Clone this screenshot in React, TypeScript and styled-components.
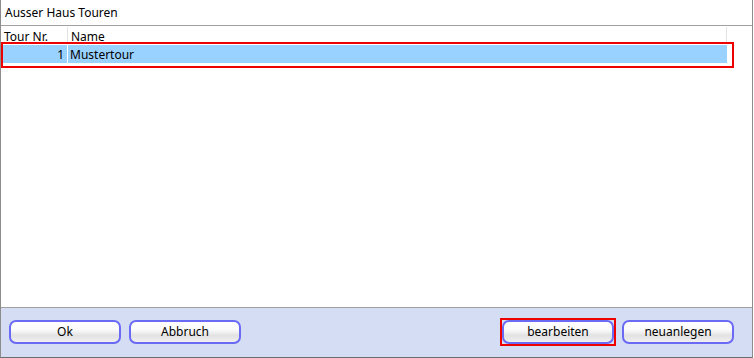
import styled, { createGlobalStyle } from "styled-components";

const GlobalStyle = createGlobalStyle`
  html, body {
    margin: 0;
    padding: 0;
    background: #ffffff;
  }
  body {
    font-family: "Noto Sans", "Liberation Sans", sans-serif;
    font-size: 12px;
    color: #000;
  }
`;

const Window = styled.div`
  width: 753px;
  height: 358px;
  box-sizing: border-box;
  border-left: 1px solid #8c8c8c;
  border-right: 1px solid #8c8c8c;
  border-bottom: 1px solid #6e6e6e;
  display: flex;
  flex-direction: column;
  background: #fff;
`;

const TitleBar = styled.div`
  height: 25px;
  flex: none;
  display: flex;
  align-items: center;
  padding-left: 4px;
  border-bottom: 1px solid #a0a0a0;
  font-size: 12px;
`;

const ListArea = styled.div`
  flex: 1;
  position: relative;
  background: #fff;
  padding-top: 1px;
`;

const HeaderRow = styled.div`
  display: flex;
  height: 17px;
  width: 725px;
  border-right: 1px solid #e3e3e3;
  align-items: flex-end;
`;

const HeaderCell = styled.div<{ $w?: number }>`
  width: ${(p) => (p.$w ? `${p.$w}px` : "auto")};
  flex: ${(p) => (p.$w ? "none" : "1")};
  box-sizing: border-box;
  padding-left: 3px;
  height: 100%;
  display: flex;
  align-items: flex-end;
  line-height: 14px;
  border-right: ${(p) => (p.$w ? "1px solid #e3e3e3" : "none")};
`;

const Row = styled.div<{ $selected?: boolean }>`
  display: flex;
  height: 18px;
  margin: 1px 0 0 2px;
  width: 724px;
  background: ${(p) => (p.$selected ? "#99d1ff" : "transparent")};
`;

const Cell = styled.div<{ $w?: number; $right?: boolean }>`
  width: ${(p) => (p.$w ? `${p.$w}px` : "auto")};
  flex: ${(p) => (p.$w ? "none" : "1")};
  box-sizing: border-box;
  display: flex;
  align-items: center;
  justify-content: ${(p) => (p.$right ? "flex-end" : "flex-start")};
  padding: 0 3px 0 2px;
  border-right: ${(p) => (p.$w ? "1px solid #fff" : "none")};
`;

const Highlight = styled.div<{ $top: number; $left: number; $w: number; $h: number }>`
  position: absolute;
  top: ${(p) => p.$top}px;
  left: ${(p) => p.$left}px;
  width: ${(p) => p.$w}px;
  height: ${(p) => p.$h}px;
  box-sizing: border-box;
  border: 2px solid #ee0000;
  pointer-events: none;
`;

const ButtonBar = styled.div`
  height: 50px;
  flex: none;
  box-sizing: border-box;
  border-top: 1px solid #a0a0a0;
  background: #d5ddf5;
  display: flex;
  align-items: center;
  padding: 0 18px 2px 8px;
  gap: 8px;
`;

const Spacer = styled.div`
  flex: 1;
`;

const ButtonWrap = styled.div<{ $marked?: boolean }>`
  border: 2px solid ${(p) => (p.$marked ? "#ee0000" : "transparent")};
  margin: -2px;
  display: flex;
`;

const Button = styled.button`
  width: 112px;
  height: 24px;
  box-sizing: border-box;
  border: 2px solid #6a6af5;
  border-radius: 7px;
  background: linear-gradient(#ffffff 0%, #fafafa 40%, #e2e2e2 68%, #f0f0f0 100%);
  font-family: "Noto Sans", "Liberation Sans", sans-serif;
  font-size: 12px;
  color: #000;
  padding: 0;
  display: flex;
  align-items: center;
  justify-content: center;
`;

export default function App() {
  return (
    <>
      <GlobalStyle />
      <Window>
        <TitleBar>Ausser Haus Touren</TitleBar>
        <ListArea>
          <HeaderRow>
            <HeaderCell $w={67}>Tour Nr.</HeaderCell>
            <HeaderCell>Name</HeaderCell>
          </HeaderRow>
          <Row $selected>
            <Cell $w={65} $right>
              1
            </Cell>
            <Cell>Mustertour</Cell>
          </Row>
          <Highlight $top={16} $left={0} $w={733} $h={26} />
        </ListArea>
        <ButtonBar>
          <Button>Ok</Button>
          <Button>Abbruch</Button>
          <Spacer />
          <ButtonWrap $marked>
            <Button>bearbeiten</Button>
          </ButtonWrap>
          <Button>neuanlegen</Button>
        </ButtonBar>
      </Window>
    </>
  );
}
